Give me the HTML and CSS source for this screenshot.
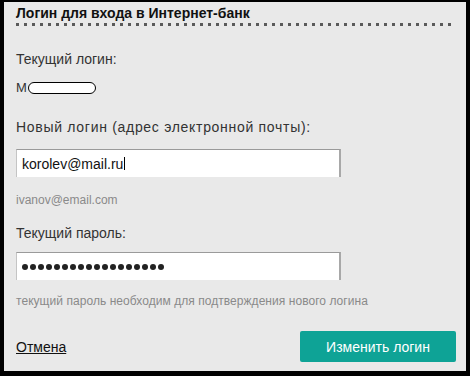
FILE: index.html
```html
<!DOCTYPE html>
<html lang="ru">
<head>
<meta charset="utf-8">
<link rel="stylesheet" href="styles.css">
</head>
<body>
<div class="panel">
  <div class="title">Логин для входа в Интернет-банк</div>
  <div class="dots"></div>
  <div class="label first">Текущий логин:</div>
  <div class="current"><span class="m">М</span><span class="oval"></span></div>
  <div class="label second">Новый логин (адрес электронной почты):</div>
  <div class="field"><span class="value">korolev@mail.ru</span><span class="caret"></span></div>
  <div class="note">ivanov@email.com</div>
  <div class="label third">Текущий пароль:</div>
  <div class="field pw">
    <span class="bul"></span><span class="bul"></span><span class="bul"></span><span class="bul"></span><span class="bul"></span><span class="bul"></span><span class="bul"></span><span class="bul"></span><span class="bul"></span><span class="bul"></span><span class="bul"></span><span class="bul"></span><span class="bul"></span><span class="bul"></span><span class="bul"></span><span class="bul"></span><span class="bul"></span><span class="bul"></span>
  </div>
  <div class="hint">текущий пароль необходим для подтверждения нового логина</div>
  <div class="footer">
    <a class="cancel" href="#">Отмена</a>
    <button class="submit">Изменить логин</button>
  </div>
</div>
</body>
</html>
```
FILE: styles.css
```css
html, body {
  margin: 0;
  padding: 0;
}
body {
  width: 470px;
  height: 376px;
  box-sizing: border-box;
  background: #000;
  padding: 2px 4px 5px 4px;
  display: flex;
  flex-direction: column;
  font-family: "Liberation Sans", Arial, sans-serif;
  color: #333;
}
.panel {
  flex: 1;
  background: #e9e9e9;
  padding: 3px 10px 0 12px;
  display: flex;
  flex-direction: column;
}
.title {
  font-size: 14px;
  font-weight: bold;
  line-height: 16px;
  color: #111;
}
.dots {
  margin-top: 2px;
  height: 3px;
  width: 439px;
  background: repeating-linear-gradient(to right, #5a5a5a 0 3px, transparent 3px 8px);
}
.label {
  font-size: 14px;
  line-height: 16px;
  color: #333;
}
.first { margin-top: 25px; }
.second { margin-top: 24px; letter-spacing: 0.7px; }
.third { margin-top: 18px; }
.current {
  margin-top: 14px;
  height: 14px;
  display: flex;
  align-items: center;
  font-size: 13px;
  color: #333;
}
.m { line-height: 14px; }
.oval {
  margin-left: 1px;
  width: 66px;
  height: 10px;
  border: 1px solid #000;
  border-radius: 6px;
  background: #fff;
}
.field {
  margin-top: 14px;
  width: 325px;
  height: 28px;
  box-sizing: border-box;
  background: #fff;
  border-top: 1px solid #9a9a9a;
  border-left: 1px solid #c4c4c4;
  border-right: 2px solid #a8a8a8;
  padding-left: 5px;
  display: flex;
  align-items: center;
  font-size: 14px;
  color: #111;
}
.caret {
  width: 1px;
  height: 13px;
  background: #000;
  margin-left: 1px;
}
.pw {
  margin-top: 11px;
  gap: 2px;
}
.bul {
  width: 6px;
  height: 6px;
  border-radius: 50%;
  background: #222;
}
.note {
  margin-top: 16px;
  font-size: 12px;
  line-height: 14px;
  color: #8a8a8a;
}
.hint {
  margin-top: 14px;
  font-size: 12px;
  letter-spacing: 0.05px;
  line-height: 14px;
  color: #8a8a8a;
}
.footer {
  margin-top: 23px;
  display: flex;
  justify-content: space-between;
  align-items: center;
}
.cancel {
  font-size: 14px;
  color: #111;
  text-decoration: underline;
}
.submit {
  width: 156px;
  height: 31px;
  border: none;
  border-radius: 2px;
  background: #0ea396;
  color: #fff;
  font-family: "Liberation Sans", Arial, sans-serif;
  font-size: 14px;
  padding: 0;
}
```
